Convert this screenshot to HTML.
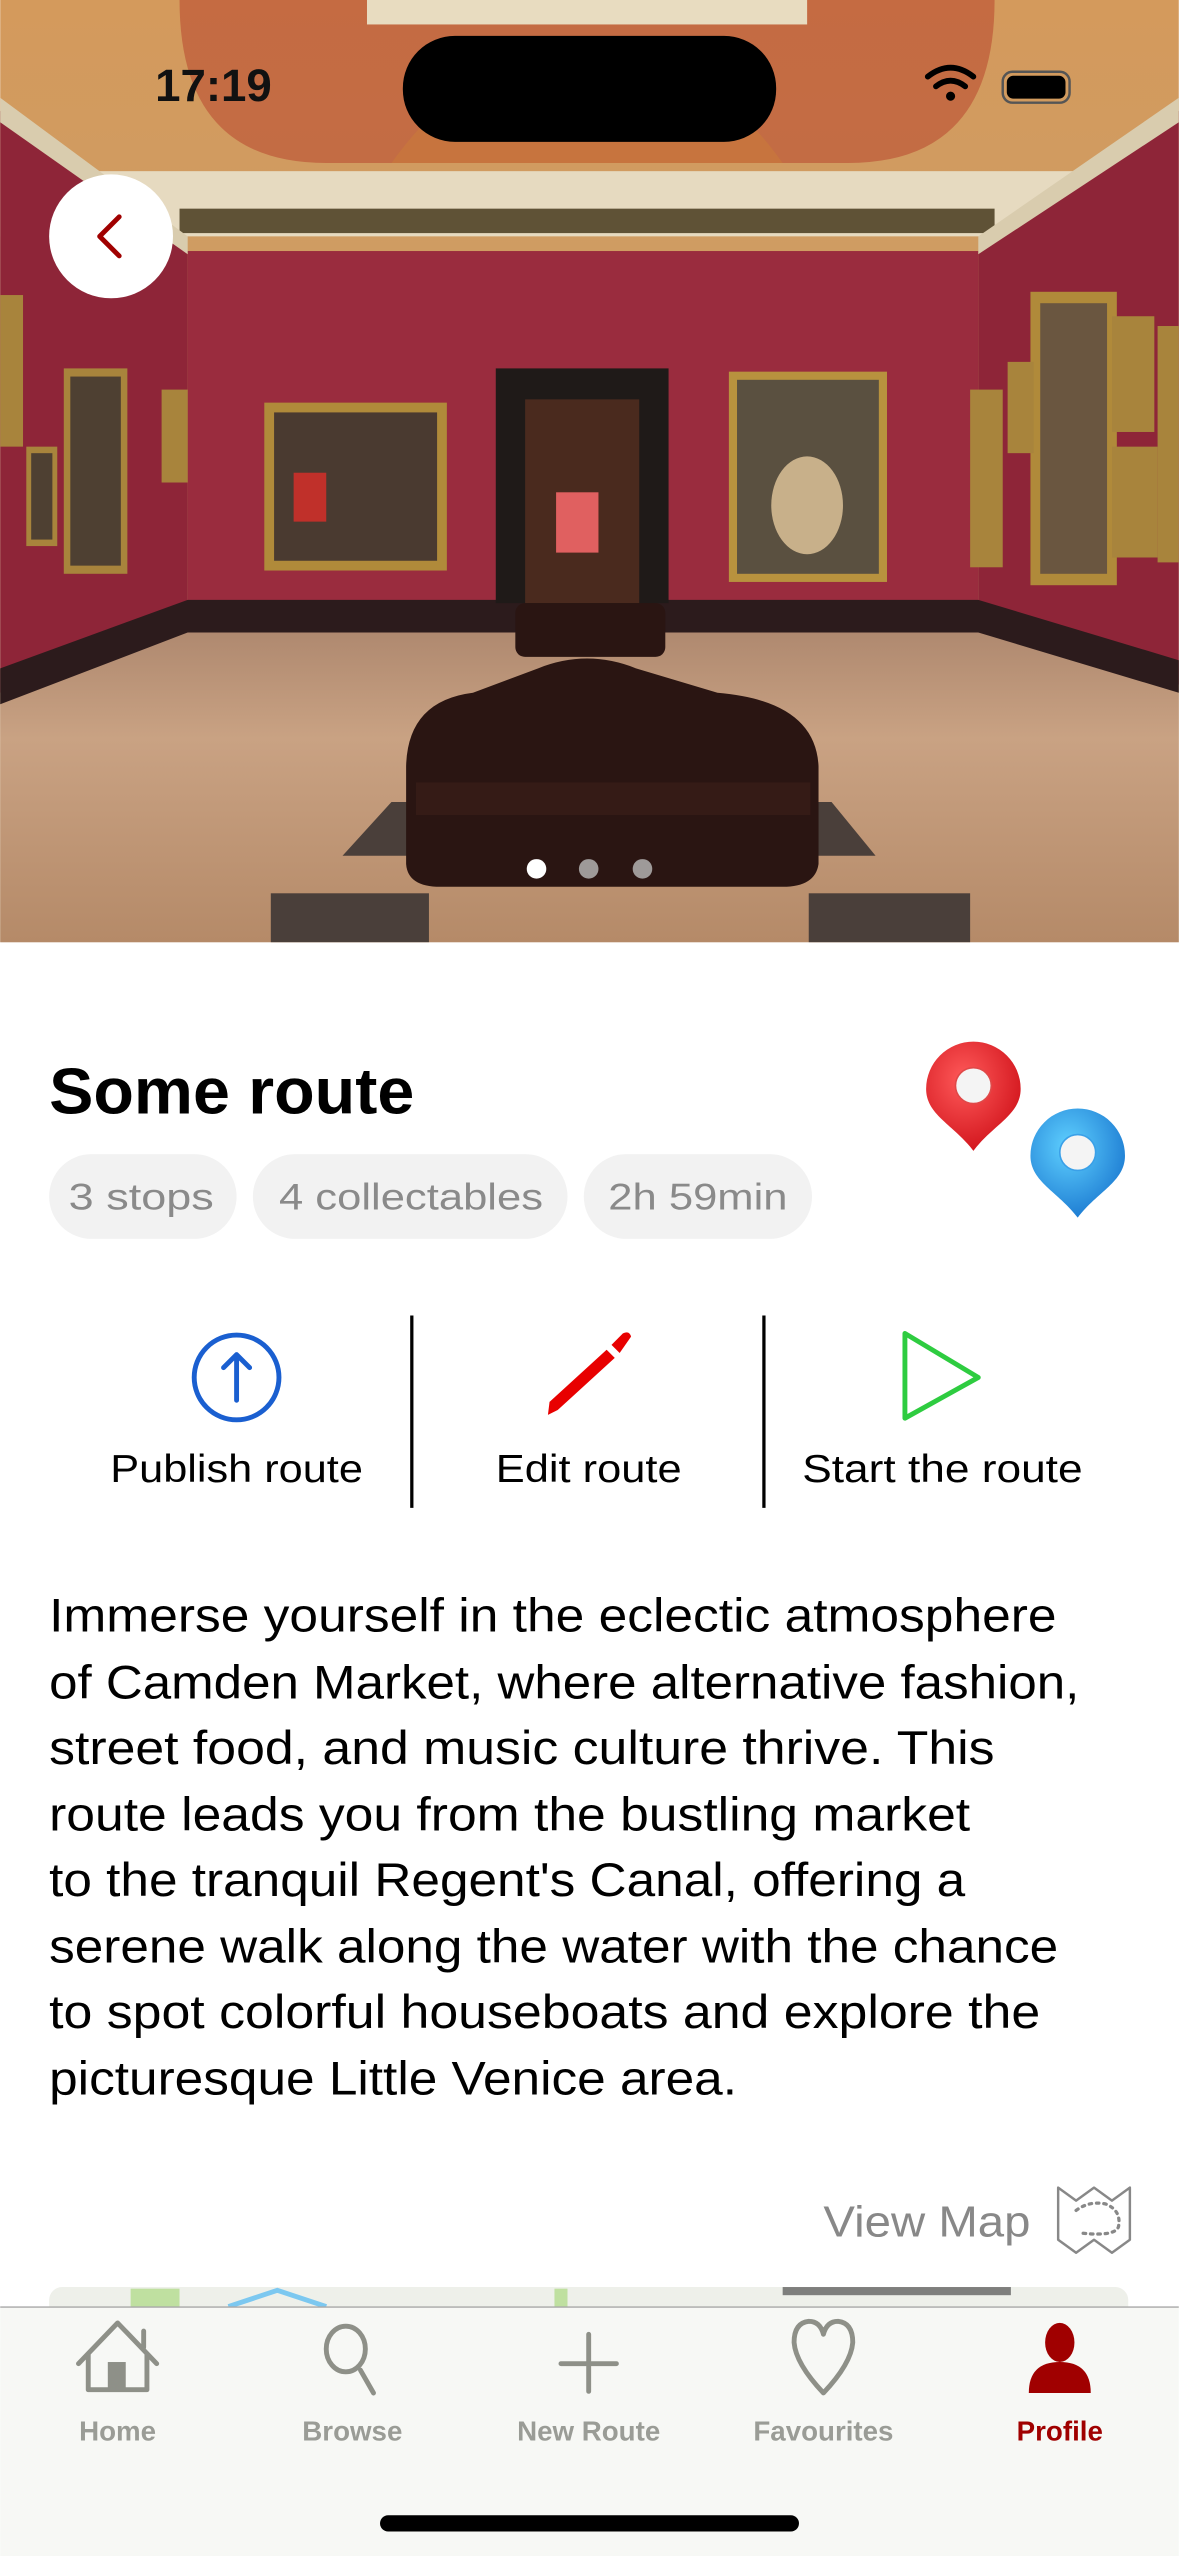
<!DOCTYPE html>
<html><head><meta charset="utf-8"><style>
html,body{margin:0;padding:0;background:#fff;}
svg{display:block;}
text{font-family:"Liberation Sans",sans-serif;}
</style></head><body>
<svg width="1179" height="2556" viewBox="0 0 723 1568" xmlns="http://www.w3.org/2000/svg">
<defs>
<linearGradient id="floor" x1="0" y1="0" x2="0" y2="1"><stop offset="0" stop-color="#a8826a"/><stop offset="0.4" stop-color="#c9a283"/><stop offset="1" stop-color="#b58a68"/></linearGradient>
<linearGradient id="ceil" x1="0" y1="0" x2="0" y2="1"><stop offset="0" stop-color="#d49a5c"/><stop offset="0.6" stop-color="#c99e6a"/><stop offset="1" stop-color="#e2d3b2"/></linearGradient>
<radialGradient id="pr" cx="0.4" cy="0.35" r="0.7"><stop offset="0" stop-color="#ff5a5a"/><stop offset="1" stop-color="#d0121a"/></radialGradient>
<radialGradient id="pb" cx="0.4" cy="0.35" r="0.7"><stop offset="0" stop-color="#5fd0ff"/><stop offset="1" stop-color="#1a78d0"/></radialGradient>
</defs>
<!-- PHOTO -->
<rect x="0" y="0" width="723" height="578" fill="url(#ceil)"/>
<path d="M110 0 Q110 100 200 100 L520 100 Q610 100 610 0Z" fill="#b8452e" opacity="0.55"/>
<path d="M240 100 Q290 30 360 30 Q430 30 480 100Z" fill="#c9783c" opacity="0.7"/>
<rect x="225" y="0" width="270" height="15" fill="#e8dcc0"/>
<rect x="0" y="105" width="723" height="40" fill="#e6dac0"/>
<rect x="110" y="128" width="500" height="15" fill="#5f5236"/>
<polygon points="0,68 115,154 115,370 0,425" fill="#8e2538"/>
<polygon points="723,68 600,154 600,370 723,420" fill="#8e2538"/>
<rect x="115" y="154" width="485" height="216" fill="#9a2c3e"/>
<polygon points="0,60 115,145 115,156 0,75" fill="#d9ccae"/>
<polygon points="723,60 600,145 600,156 723,75" fill="#d9ccae"/>
<polygon points="0,425 115,370 600,370 723,420 723,578 0,578" fill="url(#floor)"/>
<polygon points="0,410 115,368 600,368 723,405 723,425 600,388 115,388 0,432" fill="#2c1b1c"/>
<rect x="304" y="226" width="106" height="144" fill="#1f1a18"/>
<rect x="322" y="245" width="70" height="125" fill="#4a2a1e"/>
<rect x="341" y="302" width="26" height="37" fill="#e06060"/>
<rect x="162" y="247" width="112" height="103" fill="#b08a3a"/>
<rect x="168" y="253" width="100" height="91" fill="#4a3a30"/>
<rect x="180" y="290" width="20" height="30" fill="#c0302a"/>
<rect x="447" y="228" width="97" height="129" fill="#b8923e"/>
<rect x="452" y="233" width="87" height="119" fill="#5a5040"/>
<ellipse cx="495" cy="310" rx="22" ry="30" fill="#c8b08a"/>
<rect x="39" y="226" width="39" height="126" fill="#a8843c"/><rect x="43" y="231" width="31" height="116" fill="#4e4032"/>
<rect x="99" y="239" width="16" height="57" fill="#a8843c"/>
<rect x="16" y="274" width="19" height="61" fill="#a8843c"/><rect x="19" y="278" width="13" height="53" fill="#4e4032"/>
<rect x="0" y="181" width="14" height="93" fill="#a8843c"/>
<rect x="632" y="179" width="53" height="180" fill="#b08a3a"/><rect x="638" y="186" width="41" height="166" fill="#6a5640"/>
<rect x="595" y="239" width="20" height="109" fill="#a8843c"/>
<rect x="682" y="194" width="26" height="71" fill="#a8843c"/><rect x="682" y="274" width="28" height="68" fill="#a8843c"/>
<rect x="618" y="222" width="16" height="56" fill="#a8843c"/>
<rect x="710" y="200" width="13" height="145" fill="#a8843c"/>
<polygon points="210,525 240,492 510,492 537,525" fill="#4a3f3a"/>
<rect x="166" y="548" width="97" height="30" fill="#4a3f3a"/><rect x="496" y="548" width="99" height="30" fill="#4a3f3a"/>
<rect x="316" y="370" width="92" height="33" rx="6" fill="#2a1512"/>
<path d="M249 470 Q250 430 290 425 L330 410 Q360 398 390 410 L440 425 Q500 430 502 470 L502 530 Q500 544 480 544 L270 544 Q250 544 249 530Z" fill="#2a1512"/>
<rect x="255" y="480" width="242" height="20" fill="#3a1e18" opacity="0.7"/>
<!-- status bar -->
<text x="95" y="62" font-size="28" font-weight="700" fill="#111">17:19</text>
<rect x="247" y="22" width="229" height="65" rx="32" fill="#000"/>
<path d="M569 47 Q583 36 597 47" stroke="#000" stroke-width="3.5" fill="none" stroke-linecap="round"/>
<path d="M574 53 Q583 46 592 53" stroke="#000" stroke-width="3.5" fill="none" stroke-linecap="round"/>
<circle cx="583" cy="59" r="2.8" fill="#000"/>
<rect x="615" y="44" width="41" height="19" rx="6" fill="none" stroke="#555" stroke-width="1.5"/>
<rect x="617.5" y="46.5" width="36" height="14" rx="4" fill="#000"/>
<!-- back button -->
<circle cx="68" cy="145" r="38" fill="#fff"/>
<path d="M73 133 L61 145 L73 157" stroke="#a00000" stroke-width="3" fill="none" stroke-linecap="round" stroke-linejoin="round"/>
<circle cx="329" cy="533" r="6" fill="#fff"/>
<circle cx="361" cy="533" r="6" fill="#bbb" opacity="0.8"/>
<circle cx="394" cy="533" r="6" fill="#bbb" opacity="0.8"/>
<!-- CONTENT -->
<text x="30" y="683" font-size="40" font-weight="700" fill="#000" textLength="224" lengthAdjust="spacingAndGlyphs">Some route</text>
<rect x="30" y="708" width="115" height="52" rx="26" fill="#f2f2f2"/>
<rect x="155" y="708" width="193" height="52" rx="26" fill="#f2f2f2"/>
<rect x="358" y="708" width="140" height="52" rx="26" fill="#f2f2f2"/>
<text x="42" y="742" font-size="23" fill="#8a8a8a" textLength="89" lengthAdjust="spacingAndGlyphs">3 stops</text>
<text x="171" y="742" font-size="23" fill="#8a8a8a" textLength="162" lengthAdjust="spacingAndGlyphs">4 collectables</text>
<text x="373" y="742" font-size="23" fill="#8a8a8a" textLength="110" lengthAdjust="spacingAndGlyphs">2h 59min</text>
<path d="M597 706 C585 690 568 684 568 668 A29 29 0 0 1 626 668 C626 684 609 690 597 706Z" fill="url(#pr)"/>
<circle cx="597" cy="666" r="11" fill="#f4f4f4" stroke="#e04848" stroke-width="1"/>
<path d="M661 747 C649 731 632 725 632 709 A29 29 0 0 1 690 709 C690 725 673 731 661 747Z" fill="url(#pb)"/>
<circle cx="661" cy="707" r="11" fill="#f4f4f4" stroke="#3aa0e8" stroke-width="1"/>
<!-- actions -->
<line x1="252.5" y1="807" x2="252.5" y2="925" stroke="#000" stroke-width="2"/>
<line x1="468.5" y1="807" x2="468.5" y2="925" stroke="#000" stroke-width="2"/>
<circle cx="145" cy="845" r="26" fill="none" stroke="#1a5fd0" stroke-width="3"/>
<path d="M145 859 L145 831 M137 839 L145 831 L153 839" stroke="#1a5fd0" stroke-width="3" fill="none" stroke-linecap="round" stroke-linejoin="round"/>
<path d="M336 868 L337 860 L372 828 L377 833 L342 865Z" fill="#e80000"/>
<path d="M375 825 L382 818 Q386 816 387 820 L380 830Z" fill="#e80000"/>
<path d="M555 818 L600 845 L555 870Z" fill="none" stroke="#2ecc40" stroke-width="3" stroke-linejoin="round"/>
<text x="145" y="909" font-size="24" fill="#000" text-anchor="middle" textLength="155" lengthAdjust="spacingAndGlyphs">Publish route</text>
<text x="361" y="909" font-size="24" fill="#000" text-anchor="middle" textLength="114" lengthAdjust="spacingAndGlyphs">Edit route</text>
<text x="578" y="909" font-size="24" fill="#000" text-anchor="middle" textLength="172" lengthAdjust="spacingAndGlyphs">Start the route</text>
<!-- paragraph -->
<g font-size="29" fill="#000">
<text x="30" y="1001" textLength="618" lengthAdjust="spacingAndGlyphs">Immerse yourself in the eclectic atmosphere</text>
<text x="30" y="1042" textLength="632" lengthAdjust="spacingAndGlyphs">of Camden Market, where alternative fashion,</text>
<text x="30" y="1082" textLength="580" lengthAdjust="spacingAndGlyphs">street food, and music culture thrive. This</text>
<text x="30" y="1123" textLength="565" lengthAdjust="spacingAndGlyphs">route leads you from the bustling market</text>
<text x="30" y="1163" textLength="562" lengthAdjust="spacingAndGlyphs">to the tranquil Regent's Canal, offering a</text>
<text x="30" y="1204" textLength="619" lengthAdjust="spacingAndGlyphs">serene walk along the water with the chance</text>
<text x="30" y="1244" textLength="608" lengthAdjust="spacingAndGlyphs">to spot colorful houseboats and explore the</text>
<text x="30" y="1285" textLength="422" lengthAdjust="spacingAndGlyphs">picturesque Little Venice area.</text>
</g>
<text x="505" y="1372" font-size="27" fill="#888" textLength="127" lengthAdjust="spacingAndGlyphs">View Map</text>
<path d="M649 1342 L660 1350 L671 1342 L682 1350 L693 1342 L693 1374 L682 1382 L671 1374 L660 1382 L649 1374Z" stroke="#888" stroke-width="1.5" fill="none" stroke-linejoin="round"/>
<path d="M660 1356 Q668 1350 678 1352 Q688 1356 686 1366 Q684 1372 664 1370" stroke="#888" stroke-width="2" fill="none" stroke-dasharray="1.5 3" stroke-linecap="round"/>
<!-- map strip -->
<rect x="30" y="1403" width="662" height="20" rx="8" fill="#eef0ea"/>
<rect x="80" y="1404" width="30" height="12" fill="#bfe0a0"/>
<path d="M140 1415 L170 1405 L200 1415" stroke="#7cc8f0" stroke-width="3" fill="none"/>
<rect x="340" y="1404" width="8" height="12" fill="#bfe0a0"/>
<rect x="480" y="1403" width="140" height="5" fill="#333" opacity="0.6"/>
<!-- tab bar -->
<rect x="0" y="1415" width="723" height="153" fill="#f7f8f5"/>
<line x1="0" y1="1415.3" x2="723" y2="1415.3" stroke="#a8a8a8" stroke-width="0.8"/>
<g stroke="#8e9088" fill="none" stroke-width="3" stroke-linecap="round" stroke-linejoin="round">
<path d="M48 1450 L72 1425 L96 1450 M54 1444 L54 1466 L90 1466 L90 1444 M88 1430 L88 1440"/>
<ellipse cx="212" cy="1441" rx="12" ry="14"/>
<path d="M221 1454 L229 1468"/>
<path d="M361 1432 L361 1467 M344 1450 L378 1450"/>
<path d="M505 1468 Q488 1450 487 1437 Q487 1425 496 1424 Q503 1424 505 1432 Q507 1424 514 1424 Q523 1425 523 1437 Q522 1450 505 1468Z"/>
</g>
<rect x="66" y="1449" width="11" height="18" fill="#8e9088"/>
<ellipse cx="650" cy="1437" rx="9" ry="12" fill="#a00000"/>
<path d="M631 1468 Q631 1449 650 1449 Q669 1449 669 1468Z" fill="#a00000"/>
<g font-size="17" font-weight="700" text-anchor="middle" fill="#9a9c96">
<text x="72" y="1497">Home</text>
<text x="216" y="1497">Browse</text>
<text x="361" y="1497">New Route</text>
<text x="505" y="1497">Favourites</text>
<text x="650" y="1497" fill="#a00000">Profile</text>
</g>
<rect x="233" y="1543" width="257" height="10" rx="5" fill="#000"/>
</svg>
</body></html>
